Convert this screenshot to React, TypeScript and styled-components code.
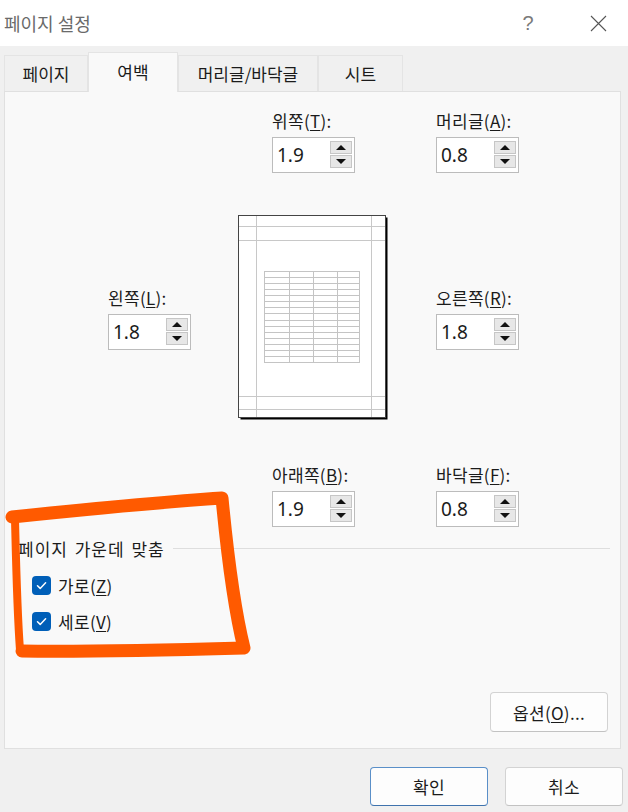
import React from 'react'
import styled, { createGlobalStyle } from 'styled-components'

const GlobalStyle = createGlobalStyle`
  html, body {
    margin: 0;
    padding: 0;
    background: #f0f0f0;
  }
  body {
    font-family: "Noto Sans CJK KR", "Noto Sans", sans-serif;
    color: #1b1b1b;
  }
  * {
    box-sizing: border-box;
  }
`

const Window = styled.div`
  position: relative;
  width: 628px;
  height: 812px;
  display: flex;
  flex-direction: column;
  background: #f0f0f0;
  overflow: hidden;
`

const TitleBar = styled.div`
  flex: none;
  height: 46px;
  display: flex;
  align-items: center;
  padding: 0 7px 0 4px;
  background: #ffffff;
`

const Title = styled.div`
  flex: 1;
  font-size: 18px;
  color: #6a6a6a;
`

const TitleActions = styled.div`
  display: flex;
  gap: 24px;
`

const TitleButton = styled.div`
  width: 46px;
  height: 36px;
  display: flex;
  align-items: center;
  justify-content: center;
  font-family: "Liberation Sans", "Noto Sans", sans-serif;
  font-size: 20px;
  font-weight: 300;
  color: #7a7a7a;
`

const Body = styled.div`
  flex: 1;
  display: flex;
  flex-direction: column;
  padding: 0 7px 0 4px;
`

const TabStrip = styled.div`
  flex: none;
  height: 45px;
  display: flex;
  align-items: flex-end;
`

const Tab = styled.div<{ $selected?: boolean; $min: number }>`
  position: relative;
  z-index: ${(p) => (p.$selected ? 1 : 0)};
  height: ${(p) => (p.$selected ? 40 : 36)}px;
  min-width: ${(p) => p.$min}px;
  padding: 0 16px;
  margin-bottom: ${(p) => (p.$selected ? -1 : 0)}px;
  display: flex;
  align-items: center;
  justify-content: center;
  font-size: 17px;
  color: #1b1b1b;
  background: ${(p) => (p.$selected ? '#f9f9f9' : '#f0f0f0')};
  border: 1px solid #e4e4e4;
  border-bottom: none;
  padding-bottom: ${(p) => (p.$selected ? 2 : 0)}px;
`

const Panel = styled.div`
  flex: none;
  height: 658px;
  display: flex;
  flex-direction: column;
  padding: 17px 12px 16px 13px;
  background: #f9f9f9;
  border: 1px solid #e0e0e0;
`

const MarginGrid = styled.div`
  display: grid;
  grid-template-columns: 83px 151px 83px;
  grid-template-rows: 64px 206px 64px;
  grid-template-areas:
    '. top header'
    'left page right'
    '. bottom footer';
  column-gap: 47px;
  row-gap: 42px;
  margin-left: 90px;
  align-items: center;
`

const Field = styled.div<{ $area: string }>`
  grid-area: ${(p) => p.$area};
  justify-self: center;
  display: flex;
  flex-direction: column;
  gap: 4px;
`

const FieldLabel = styled.label`
  height: 24px;
  line-height: 24px;
  font-size: 17px;
  letter-spacing: 0.3px;
  white-space: nowrap;
  color: #1b1b1b;

  u {
    text-underline-offset: 2px;
  }
`

const SpinBox = styled.div`
  width: 83px;
  height: 36px;
  display: flex;
  align-items: flex-start;
  background: #ffffff;
  border: 1px solid #bcbcbc;
`

const SpinValue = styled.div`
  flex: 1;
  height: 34px;
  display: flex;
  align-items: center;
  padding-left: 4px;
  font-family: "Noto Sans", "Liberation Sans", sans-serif;
  font-size: 19px;
  color: #1b1b1b;
`

const SpinButtons = styled.div`
  display: flex;
  flex-direction: column;
  gap: 1px;
  margin: 3px 2px 0 0;
`

const SpinButton = styled.div`
  width: 22px;
  height: 13px;
  display: flex;
  align-items: center;
  justify-content: center;
  background: #e7e7e7;
  border: 1px solid #c6c6c6;
`

const Arrow = styled.span<{ $dir: 'up' | 'down' }>`
  width: 0;
  height: 0;
  border-left: 5px solid transparent;
  border-right: 5px solid transparent;
  ${(p) => (p.$dir === 'up' ? 'border-bottom: 5px solid #111;' : 'border-top: 5px solid #111;')}
`

const Preview = styled.svg`
  grid-area: page;
  display: block;
`

const GroupHeader = styled.div`
  margin-top: 9px;
  height: 24px;
  display: flex;
  align-items: center;
  font-size: 17px;
  letter-spacing: 1px;
  word-spacing: 2px;
`

const GroupLine = styled.div`
  flex: 1;
  height: 1px;
  margin: 0 -2px 0 8px;
  background: #dedede;
`

const CheckList = styled.div`
  margin-top: 7px;
  padding-left: 14px;
`

const CheckRow = styled.div`
  height: 36px;
  display: flex;
  align-items: center;
  gap: 7px;
  font-size: 17px;
  letter-spacing: 0.3px;

  u {
    text-underline-offset: 2px;
  }
`

const CheckBox = styled.span`
  width: 19px;
  height: 19px;
  display: flex;
  align-items: center;
  justify-content: center;
  border-radius: 4px;
  background: #005fb8;
`

const OptionsRow = styled.div`
  margin-top: auto;
  display: flex;
  justify-content: flex-end;
`

const DialogButton = styled.button<{ $primary?: boolean; $h: number }>`
  width: 118px;
  height: ${(p) => p.$h}px;
  padding: 0;
  font-family: "Noto Sans CJK KR", "Noto Sans", sans-serif;
  font-size: 17px;
  letter-spacing: 0.3px;
  color: #1b1b1b;
  background: #fdfdfd;
  border: 1px solid ${(p) => (p.$primary ? '#5a8fc8' : '#d3d3d3')};
  border-bottom-color: ${(p) => (p.$primary ? '#3f73ad' : '#c2c2c2')};
  border-radius: 4px;

  u {
    text-underline-offset: 2px;
  }
`

const Footer = styled.div`
  flex: 1;
  display: flex;
  justify-content: flex-end;
  align-items: flex-start;
  gap: 17px;
  padding-top: 18px;
  margin-right: -2px;
`

const Annotation = styled.svg`
  position: absolute;
  left: 0;
  top: 0;
  pointer-events: none;
`

const SpinField = ({ area, label, mnemonic, value }: { area: string; label: string; mnemonic: string; value: string }) => (
  <Field $area={area}>
    <FieldLabel>
      {label}(<u>{mnemonic}</u>):
    </FieldLabel>
    <SpinBox>
      <SpinValue>{value}</SpinValue>
      <SpinButtons>
        <SpinButton>
          <Arrow $dir="up" />
        </SpinButton>
        <SpinButton>
          <Arrow $dir="down" />
        </SpinButton>
      </SpinButtons>
    </SpinBox>
  </Field>
)

const PagePreview = () => {
  const rows = Array.from({ length: 16 }, (_, i) => 56 + i * 6.07)
  const cols = [26, 51, 75, 99, 121]
  return (
    <Preview width="151" height="206" viewBox="0 0 151 206">
      <rect x="2.5" y="2.5" width="147" height="202" fill="#000" />
      <rect x="0.5" y="0.5" width="147" height="202" fill="#fff" stroke="#444" strokeWidth="1" />
      <g stroke="#c8c8c8" strokeWidth="1">
        <line x1="18.5" y1="1" x2="18.5" y2="202" />
        <line x1="133.5" y1="1" x2="133.5" y2="202" />
        <line x1="1" y1="11.5" x2="147" y2="11.5" />
        <line x1="1" y1="25.5" x2="147" y2="25.5" />
        <line x1="1" y1="181.5" x2="147" y2="181.5" />
        <line x1="1" y1="194.5" x2="147" y2="194.5" />
      </g>
      <g stroke="#c4c4c4" strokeWidth="1">
        {rows.map((y) => (
          <line key={y} x1="26" y1={Math.round(y) + 0.5} x2="121" y2={Math.round(y) + 0.5} />
        ))}
        {cols.map((x) => (
          <line key={x} x1={x + 0.5} y1="56" x2={x + 0.5} y2="148" />
        ))}
      </g>
    </Preview>
  )
}

const Check = () => (
  <CheckBox>
    <svg width="13" height="13" viewBox="0 0 13 13">
      <path d="M2.5 6.8 L5.2 9.4 L10.6 3.8" fill="none" stroke="#fff" strokeWidth="1.5" strokeLinecap="round" strokeLinejoin="round" />
    </svg>
  </CheckBox>
)

const App = () => {
  return (
    <>
      <GlobalStyle />
      <Window>
        <TitleBar>
          <Title>페이지 설정</Title>
          <TitleActions>
            <TitleButton>?</TitleButton>
            <TitleButton>
              <svg width="17" height="17" viewBox="0 0 17 17">
                <path d="M1 1 L16 16 M16 1 L1 16" stroke="#555" strokeWidth="1.1" fill="none" />
              </svg>
            </TitleButton>
          </TitleActions>
        </TitleBar>

        <Body>
          <TabStrip>
            <Tab $min={84}>페이지</Tab>
            <Tab $min={90} $selected>
              여백
            </Tab>
            <Tab $min={140}>머리글/바닥글</Tab>
            <Tab $min={85}>시트</Tab>
          </TabStrip>

          <Panel>
            <MarginGrid>
              <SpinField area="top" label="위쪽" mnemonic="T" value="1.9" />
              <SpinField area="header" label="머리글" mnemonic="A" value="0.8" />
              <SpinField area="left" label="왼쪽" mnemonic="L" value="1.8" />
              <PagePreview />
              <SpinField area="right" label="오른쪽" mnemonic="R" value="1.8" />
              <SpinField area="bottom" label="아래쪽" mnemonic="B" value="1.9" />
              <SpinField area="footer" label="바닥글" mnemonic="F" value="0.8" />
            </MarginGrid>

            <GroupHeader>
              페이지 가운데 맞춤
              <GroupLine />
            </GroupHeader>
            <CheckList>
              <CheckRow>
                <Check />
                <span>
                  가로(<u>Z</u>)
                </span>
              </CheckRow>
              <CheckRow>
                <Check />
                <span>
                  세로(<u>V</u>)
                </span>
              </CheckRow>
            </CheckList>

            <OptionsRow>
              <DialogButton $h={40}>
                옵션(<u>O</u>)...
              </DialogButton>
            </OptionsRow>
          </Panel>

          <Footer>
            <DialogButton $h={39} $primary>
              확인
            </DialogButton>
            <DialogButton $h={39}>취소</DialogButton>
          </Footer>
        </Body>

        <Annotation width="628" height="812" viewBox="0 0 628 812">
          <g fill="none" stroke="#ff5a00" strokeLinecap="round" strokeLinejoin="round">
            <path
              d="M12 517 C 80 510 160 502 222 498 C 226 540 232 600 244 648 C 170 650 90 652 22 651"
              strokeWidth="13"
            />
            <path d="M15 519 C 16 560 17 610 20 650" strokeWidth="8" />
          </g>
        </Annotation>
      </Window>
    </>
  )
}

export default App
